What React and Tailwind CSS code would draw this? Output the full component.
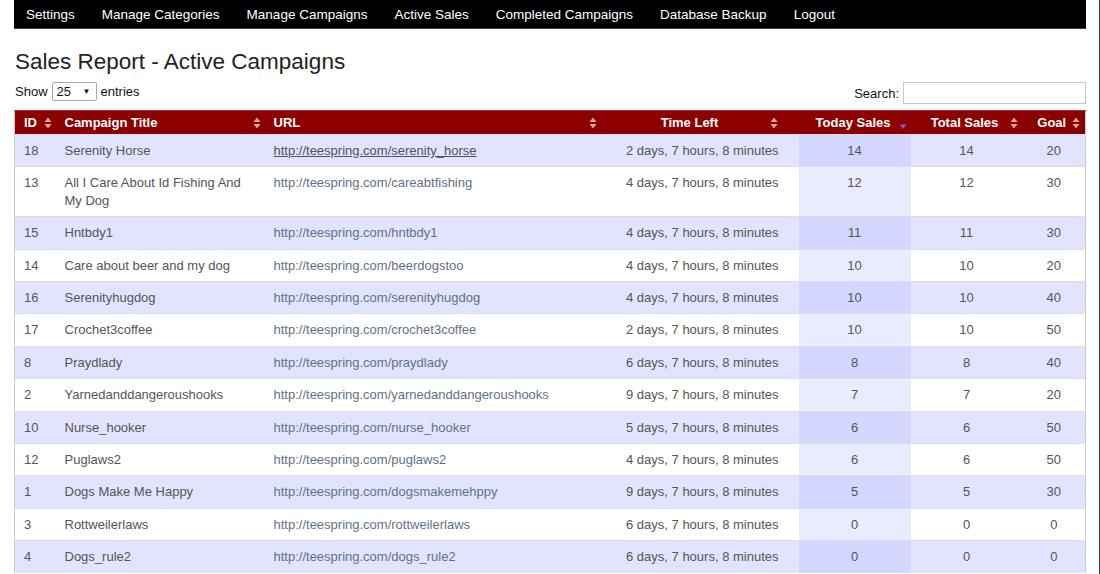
import React from 'react';

const navLinks = ['Settings', 'Manage Categories', 'Manage Campaigns', 'Active Sales', 'Completed Campaigns', 'Database Backup', 'Logout'];

const rows = [
  [18, 'Serenity Horse', 'serenity_horse', '2 days, 7 hours, 8 minutes', 14, 14, 20],
  [13, 'All I Care About Id Fishing And My Dog', 'careabtfishing', '4 days, 7 hours, 8 minutes', 12, 12, 30],
  [15, 'Hntbdy1', 'hntbdy1', '4 days, 7 hours, 8 minutes', 11, 11, 30],
  [14, 'Care about beer and my dog', 'beerdogstoo', '4 days, 7 hours, 8 minutes', 10, 10, 20],
  [16, 'Serenityhugdog', 'serenityhugdog', '4 days, 7 hours, 8 minutes', 10, 10, 40],
  [17, 'Crochet3coffee', 'crochet3coffee', '2 days, 7 hours, 8 minutes', 10, 10, 50],
  [8, 'Praydlady', 'praydlady', '6 days, 7 hours, 8 minutes', 8, 8, 40],
  [2, 'Yarnedanddangeroushooks', 'yarnedanddangeroushooks', '9 days, 7 hours, 8 minutes', 7, 7, 20],
  [10, 'Nurse_hooker', 'nurse_hooker', '5 days, 7 hours, 8 minutes', 6, 6, 50],
  [12, 'Puglaws2', 'puglaws2', '4 days, 7 hours, 8 minutes', 6, 6, 50],
  [1, 'Dogs Make Me Happy', 'dogsmakemehppy', '9 days, 7 hours, 8 minutes', 5, 5, 30],
  [3, 'Rottweilerlaws', 'rottweilerlaws', '6 days, 7 hours, 8 minutes', 0, 0, 0],
  [4, 'Dogs_rule2', 'dogs_rule2', '6 days, 7 hours, 8 minutes', 0, 0, 0],
];

// both-way sort arrows
const SortBoth = () => (
  <svg width="8" height="12" viewBox="0 0 8 12" className="shrink-0">
    <path d="M4 0.5 L7.5 5 L0.5 5 Z" fill="#e6a3a3" />
    <path d="M0.5 7 L7.5 7 L4 11.5 Z" fill="#e6a3a3" />
  </svg>
);

const SortDesc = () => (
  <svg width="8" height="12" viewBox="0 0 8 12" className="shrink-0">
    <path d="M0.5 7.5 L7.5 7.5 L4 12 Z" fill="#7d5cc4" />
  </svg>
);

const Th = ({ children, center, icon, extra }) => (
  <th className={`py-[4px] pl-[9px] font-bold text-white text-[13px] leading-[15px] ${extra}`}>
    <div className="flex items-center h-[15px]">
      <span className={center ? 'flex-1 text-center' : 'flex-1 text-left'}>{children}</span>
      {icon === 'desc' ? <SortDesc /> : <SortBoth />}
    </div>
  </th>
);

const App = () => {
  return (
    <div className="flex min-h-[574px] bg-white" style={{ fontFamily: '"Liberation Sans", Arial, sans-serif' }}>
      <div className="flex-1 pl-[14px] pr-[13px]">
        <nav className="flex h-[29px] items-center bg-black border-b border-[#3a3a3a] pl-[12px] pt-[3px]">
          {navLinks.map(l => (
            <a key={l} className="mr-[27px] text-[13.5px] text-white">{l}</a>
          ))}
        </nav>

        <h1 className="mt-[20px] pl-[1px] text-[22.5px] leading-[26px] text-[#222]">Sales Report - Active Campaigns</h1>

        <div className="mt-[7px] flex items-start justify-between h-[22px] pl-[1px]">
          <div className="flex items-center h-[19px] text-[13px] text-[#111]">
            <span>Show</span>
            <div className="mx-[4px] flex h-[19px] w-[45px] items-center justify-between rounded-[2px] border border-[#a9a9a9] bg-white pl-[4px] pr-[5px]">
              <span>25</span>
              <span className="text-[8px]">▼</span>
            </div>
            <span>entries</span>
          </div>
          <div className="flex items-center text-[13px] text-[#111]">
            <span className="mr-[4px] mt-[2px]">Search:</span>
            <div className="h-[22px] w-[183px] border border-[#c6c6c6] bg-white" />
          </div>
        </div>

        <table className="mt-[6px] w-[1071px] table-fixed border-collapse border-x border-[#c9c9c9] text-[13px] text-[#555]">
          <colgroup>
            <col className="w-[41px]" />
            <col className="w-[209px]" />
            <col className="w-[336px]" />
            <col className="w-[198px]" />
            <col className="w-[112px]" />
            <col className="w-[112px]" />
            <col className="w-[63px]" />
          </colgroup>
          <thead>
            <tr className="bg-[#8c0000] border-t border-[#b03030]">
              <Th extra="pr-[4px]">ID</Th>
              <Th extra="pr-[4px]">Campaign Title</Th>
              <Th extra="pr-[4px]">URL</Th>
              <Th center extra="pr-[21px]">Time Left</Th>
              <Th center icon="desc" extra="pr-[4px]">Today Sales</Th>
              <Th center extra="pr-[5px]">Total Sales</Th>
              <Th center extra="pr-[5px]">Goal</Th>
            </tr>
          </thead>
          <tbody>
            {rows.map((r, i) => {
              const odd = i % 2 === 0;
              return (
                <tr key={r[0]} className={`border-t border-[#dcdcea] align-top leading-[17.4px] ${odd ? 'bg-[#e2e4ff]' : 'bg-white'}`}>
                  <td className="py-[7px] pl-[9px]">{r[0]}</td>
                  <td className="py-[7px] pl-[9px] pr-[9px]">{r[1]}</td>
                  <td className="py-[7px] pl-[9px]">
                    <a className={i === 0 ? 'text-[#4f5160] underline' : 'text-[#5f7285]'}>http://teespring.com/{r[2]}</a>
                  </td>
                  <td className="py-[7px] pr-[20px] text-right">{r[3]}</td>
                  <td className={`py-[7px] text-center ${odd ? 'bg-[#d3d6ff]' : 'bg-[#eaebff]'}`}>{r[4]}</td>
                  <td className="py-[7px] text-center">{r[5]}</td>
                  <td className="py-[7px] text-center">{r[6]}</td>
                </tr>
              );
            })}
          </tbody>
        </table>
      </div>
      <div className="w-[1px] bg-[#d8dcdc]" />
      <div className="w-[2px] bg-[#2d4444]" />
    </div>
  );
};

export default App;
